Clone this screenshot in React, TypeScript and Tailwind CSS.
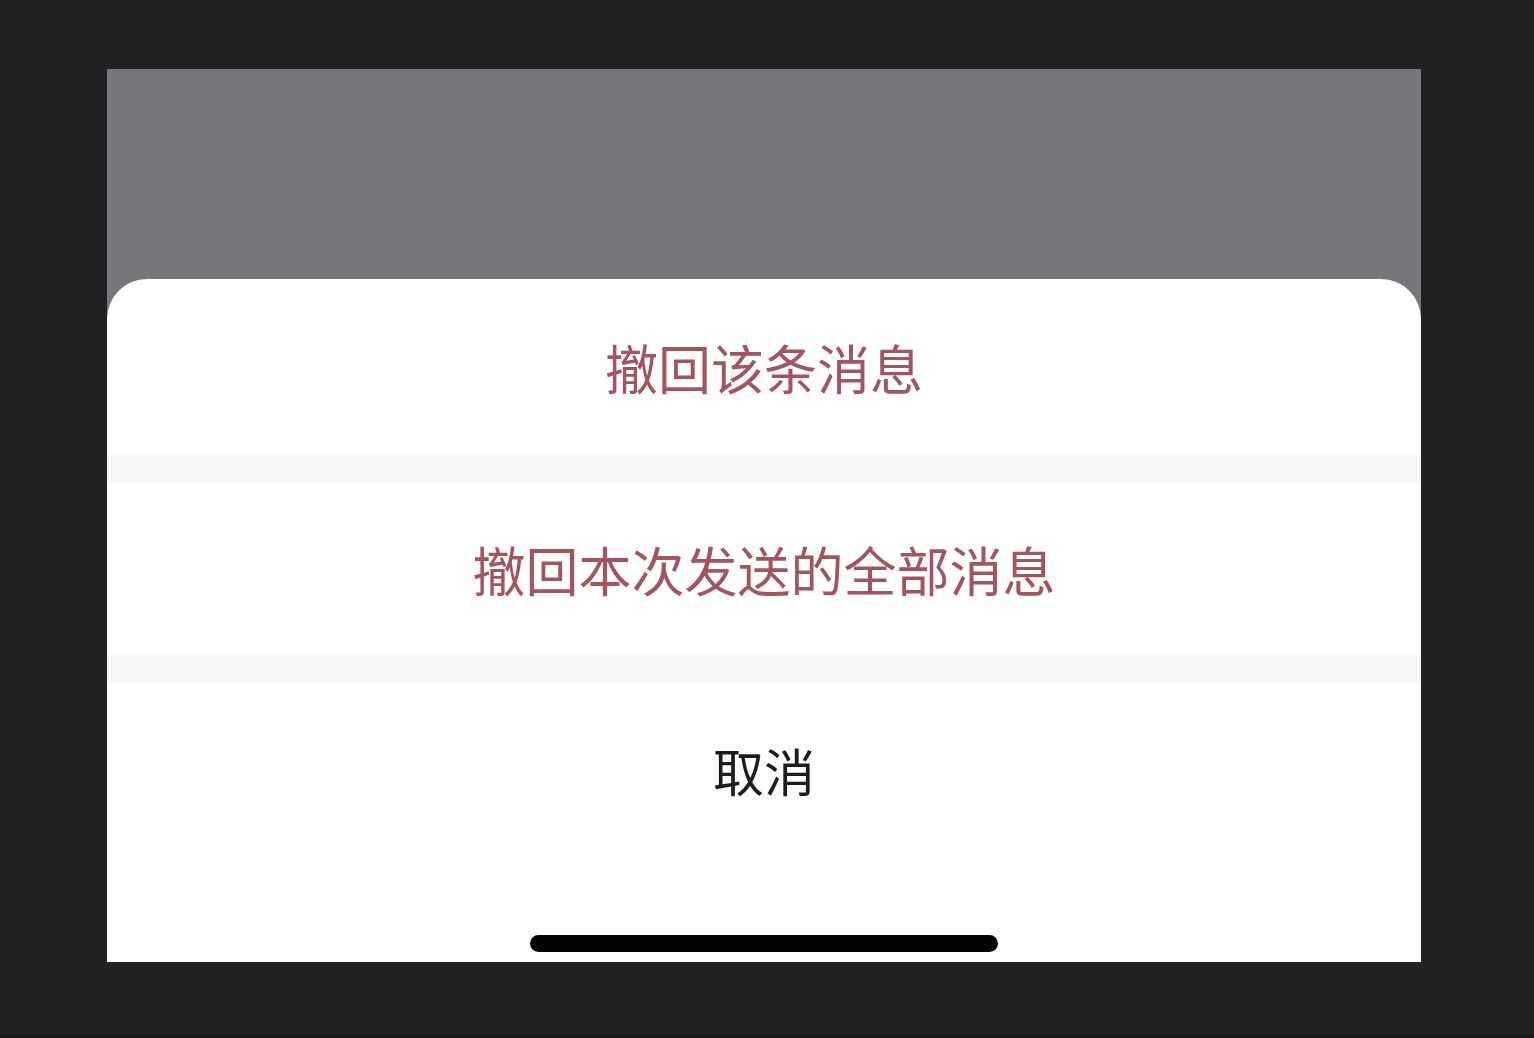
const cjk = { fontFamily: '"Noto Sans CJK SC", "Noto Sans", sans-serif' };

// Action sheet options.
const actions = [
  { label: "撤回该条消息", height: "h-[176px]" },
  { label: "撤回本次发送的全部消息", height: "h-[172px]" },
];

export default function App() {
  return (
    <div className="flex h-[1038px] w-full flex-col bg-[#222023]" style={cjk}>
      <div className="flex flex-1 flex-col pl-[107px] pr-[113px] pt-[69px] pb-[72px]">
        <div className="flex flex-1 flex-col bg-[#78767a]">
          <div className="h-[210px]" />
          <div className="flex flex-1 flex-col rounded-t-[40px] bg-white">
            {actions.map((a) => (
              <div key={a.label} className="flex flex-col">
                <div
                  className={`flex ${a.height} items-center justify-center text-[53px] leading-none text-[#a3545e]`}
                >
                  {a.label}
                </div>
                <div className="h-[28px] bg-[#f7f6f8]" />
              </div>
            ))}
            <div className="flex h-[172px] items-center justify-center pt-[2px] text-[51px] leading-none text-[#1c1b1d]">
              取消
            </div>
            <div className="flex flex-1 items-end justify-center pb-[10px]">
              <div className="h-[17px] w-[468px] rounded-full bg-[#050307]" />
            </div>
          </div>
        </div>
      </div>
      <div className="h-[4px] bg-[#1a191b]" />
    </div>
  );
}
